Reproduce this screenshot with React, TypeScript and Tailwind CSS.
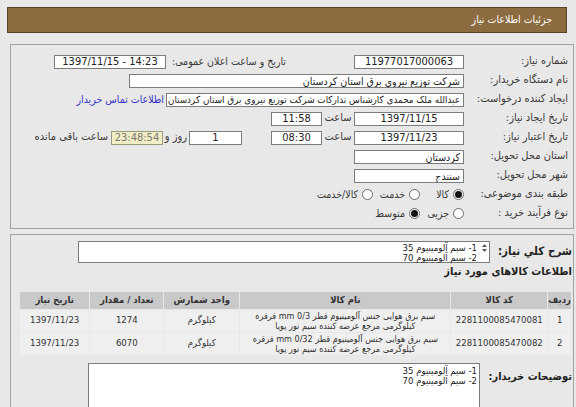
import React from 'react';

type BoxProps = { className?: string; children?: React.ReactNode };

// white, thin-bordered field like the old ASP.NET text boxes
const Field: React.FC<BoxProps> = ({ className = '', children }) => (
  <div
    className={`h-[14px] shrink-0 overflow-hidden whitespace-nowrap border border-[#7c7c7c] bg-white px-[3px] leading-[12px] text-[#222] ${className}`}
  >
    {children}
  </div>
);

const Label: React.FC<BoxProps> = ({ className = '', children }) => (
  <span className={`shrink-0 whitespace-nowrap text-[#3a3a3a] ${className}`}>{children}</span>
);

const Row: React.FC<BoxProps> = ({ children }) => (
  <div className="flex h-[19px] items-center text-[11px]">{children}</div>
);

const Radio: React.FC<{ checked?: boolean }> = ({ checked }) => (
  <span className="flex h-[11px] w-[11px] shrink-0 items-center justify-center rounded-full border border-[#6b6b6b] bg-white">
    {checked && <span className="h-[7px] w-[7px] rounded-full bg-[#111]" />}
  </span>
);

const Option: React.FC<{ checked?: boolean; className?: string; text: string }> = ({ checked, className = '', text }) => (
  <span className={`flex shrink-0 items-center gap-[4px] ${className}`}>
    <Radio checked={checked} />
    <span className="whitespace-nowrap text-[10.5px] text-[#3a3a3a]">{text}</span>
  </span>
);

const items = [
  {
    row: '1',
    code: '2281100085470081',
    name: ['سیم برق هوایی جنس آلومینیوم قطر mm 0/3 قرقره', 'کیلوگرمی مرجع عرضه کننده سیم نور پویا'],
    unit: 'کیلوگرم',
    qty: '1274',
    date: '1397/11/23',
  },
  {
    row: '2',
    code: '2281100085470082',
    name: ['سیم برق هوایی جنس آلومینیوم قطر mm 0/32 قرقره', 'کیلوگرمی مرجع عرضه کننده سیم نور پویا'],
    unit: 'کیلوگرم',
    qty: '6070',
    date: '1397/11/23',
  },
];

export default function App() {
  return (
    <div
      dir="rtl"
      className="h-[407px] w-[576px] overflow-hidden bg-[#e8e8e8] pt-[7px] font-['DejaVu_Sans_Condensed','DejaVu_Sans',sans-serif]"
    >
      {/* Title bar */}
      <div className="ml-[7px] mr-[9px] flex h-[26px] items-center border border-[#5b4526] bg-[#8b6b3f] pr-[14px] text-[10.5px] text-white">
        جزئیات اطلاعات نیاز
      </div>

      {/* Main info panel */}
      <div className="ml-[10px] mr-[2px] mt-[11px] border border-[#a3a3a3] pb-[5px] pr-[5px] pt-[7px]">
        <Row>
          <Label className="w-[104px]">شماره نیاز:</Label>
          <Field className="w-[110px] text-center text-[11px]">11977017000063</Field>
          <span className="w-[68px] shrink-0" />
          <Label className="w-[117px] text-[10.5px]">تاریخ و ساعت اعلان عمومی:</Label>
          <Field className="mr-[3px] w-[112px] text-center text-[11px]">
            <span dir="ltr">1397/11/15 - 14:23</span>
          </Field>
        </Row>
        <Row>
          <Label className="w-[104px]">نام دستگاه خریدار:</Label>
          <Field className="w-[335px] text-[10.5px]">شرکت توزیع نیروی برق استان کردستان</Field>
        </Row>
        <Row>
          <Label className="w-[104px]">ایجاد کننده درخواست:</Label>
          <Field className="w-[298px] text-[9.8px]">عبدالله ملک محمدی کارشناس تدارکات شرکت توزیع نیروی برق استان کردستان</Field>
          <a className="mr-[2px] whitespace-nowrap text-[10.5px] text-[#3535c8]">اطلاعات تماس خریدار</a>
        </Row>
        <Row>
          <Label className="w-[104px]">تاریخ ایجاد نیاز:</Label>
          <Field className="w-[110px] text-center text-[11px]">1397/11/15</Field>
          <Label className="w-[32px] text-center">ساعت</Label>
          <Field className="w-[51px] text-center text-[11px]">11:58</Field>
        </Row>
        <Row>
          <Label className="w-[104px]">تاریخ اعتبار نیاز:</Label>
          <Field className="w-[110px] text-center text-[11px]">1397/11/23</Field>
          <Label className="w-[32px] text-center">ساعت</Label>
          <Field className="w-[51px] text-center text-[11px]">08:30</Field>
          <Field className="mr-[29px] w-[53px] text-center text-[11px]">1</Field>
          <Label className="w-[26px] text-center">روز و</Label>
          <div className="h-[14px] w-[52px] shrink-0 border border-[#9a9a7a] bg-[#f1edc4] text-center text-[11px] leading-[12px] text-[#777]">
            23:48:54
          </div>
          <Label className="mr-[3px]">ساعت باقی مانده</Label>
        </Row>
        <Row>
          <Label className="w-[104px]">استان محل تحویل:</Label>
          <Field className="w-[110px] text-[10.5px]">کردستان</Field>
        </Row>
        <Row>
          <Label className="w-[104px]">شهر محل تحویل:</Label>
          <Field className="w-[110px] text-[10.5px]">سنندج</Field>
        </Row>
        <Row>
          <Label className="w-[104px]">طبقه بندی موضوعی:</Label>
          <Option checked text="کالا" className="w-[44px]" />
          <Option text="خدمت" className="w-[47px]" />
          <Option text="کالا/خدمت" />
        </Row>
        <Row>
          <Label className="w-[104px]">نوع فرآیند خرید :</Label>
          <Option text="جزیی" className="w-[44px]" />
          <Option checked text="متوسط" />
        </Row>
      </div>

      {/* Items panel */}
      <div className="ml-[10px] mr-[2px] mt-[5px] border border-[#a3a3a3] pr-[1px] pt-[6px]">
        <div className="flex items-center">
          <span className="w-[82px] shrink-0 whitespace-nowrap text-[11.5px] font-bold text-[#222]">شرح کلي نياز:</span>
          <div className="relative h-[22px] w-[412px] shrink-0 border border-[#7c7c7c] bg-white pr-[12px] pt-[1px] text-[9.5px] leading-[10px] text-[#222]">
            <div>1- سیم آلومینیوم 35</div>
            <div>2- سیم آلومینیوم 70</div>
            <div className="absolute right-[2px] top-[2px] flex flex-col items-center gap-[2px] text-[#555]">
              <svg width="5" height="3" viewBox="0 0 5 3"><path d="M0 3 L2.5 0 L5 3Z" fill="currentColor" /></svg>
              <svg width="5" height="3" viewBox="0 0 5 3"><path d="M0 0 L2.5 3 L5 0Z" fill="currentColor" /></svg>
            </div>
          </div>
        </div>

        <div className="mt-[1px] whitespace-nowrap text-[11px] font-bold text-[#222]">اطلاعات کالاهای مورد نیاز</div>

        <table className="mt-[10px] w-[553px] border-separate border-spacing-[1px] text-[9.5px] text-[#333]">
          <thead>
            <tr className="h-[17px] bg-[#c9c9c9] text-[9.5px] font-bold text-[#333]">
              <th className="w-[17px] font-bold">ردیف</th>
              <th className="w-[96px] font-bold">کد کالا</th>
              <th className="w-[210px] font-bold">نام کالا</th>
              <th className="w-[75px] font-bold">واحد شمارش</th>
              <th className="w-[73px] font-bold">تعداد / مقدار</th>
              <th className="font-bold">تاریخ نیاز</th>
            </tr>
          </thead>
          <tbody>
            {items.map((it) => (
              <tr key={it.row} className="h-[22px] bg-[#efefef] text-center">
                <td>{it.row}</td>
                <td>{it.code}</td>
                <td className="whitespace-nowrap text-[9px] leading-[10px]">
                  <div>{it.name[0]}</div>
                  <div>{it.name[1]}</div>
                </td>
                <td>{it.unit}</td>
                <td>{it.qty}</td>
                <td>{it.date}</td>
              </tr>
            ))}
          </tbody>
        </table>

        <div className="mt-[7px] flex items-start">
          <span className="mt-[6px] w-[92px] shrink-0 whitespace-nowrap text-[11px] font-bold text-[#222]">توضیحات خریدار:</span>
          <div className="h-[60px] w-[392px] shrink-0 border border-[#7c7c7c] bg-white pr-[2px] pt-[2px] text-[9.5px] leading-[10px] text-[#222]">
            <div>1- سیم آلومینیوم 35</div>
            <div>2- سیم آلومینیوم 70</div>
          </div>
        </div>
      </div>
    </div>
  );
}
